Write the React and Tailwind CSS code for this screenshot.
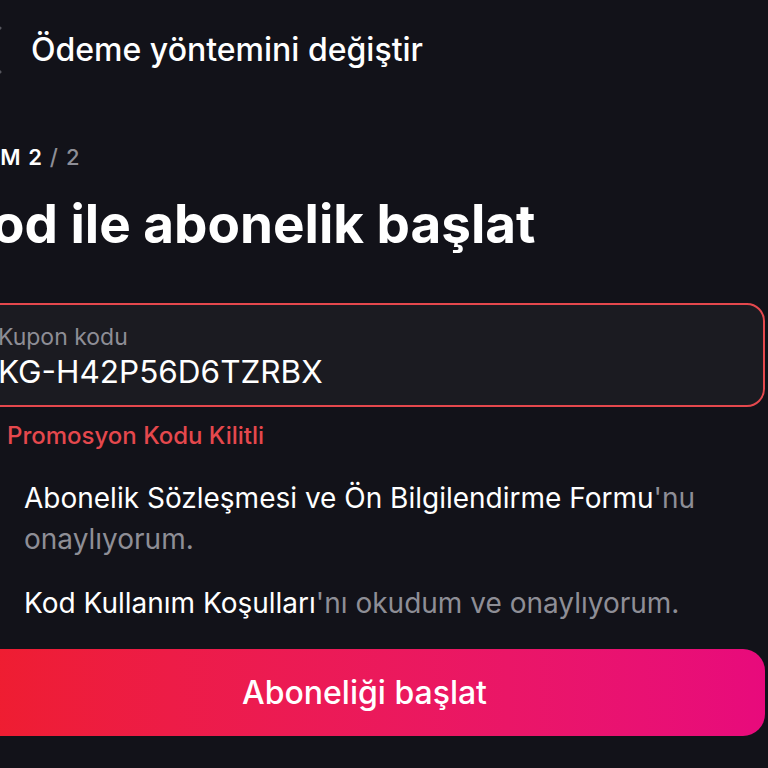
const Checkbox = () => (
  <span className="mt-1 w-9 h-9 shrink-0 rounded-lg border-2 border-[#3a3a44] bg-[#1c1c22]" />
);

export default function App() {
  return (
    <div
      className="w-[768px] h-[768px] overflow-hidden bg-[#121219] text-white"
      style={{ fontFamily: "Inter, 'Noto Sans', sans-serif" }}
    >
      <div className="ml-[-36px] w-[801px] flex flex-col">
        {/* header */}
        <div className="h-[100px] flex items-center">
          <svg viewBox="0 0 26 48" className="ml-[12px] w-[26px] h-[48px] shrink-0" fill="none">
            <polyline points="24,2 2,24 24,46" stroke="#55555d" strokeWidth="3" strokeLinecap="round" strokeLinejoin="round" />
          </svg>
          <h1 className="ml-[29px] text-[32px] font-medium leading-none">Ödeme yöntemini değiştir</h1>
        </div>

        {/* step */}
        <p className="mt-[46px] ml-[-5px] text-[22px] font-semibold tracking-wider leading-none">
          ADIM 2 <span className="text-[#8e8e96] font-medium">/ 2</span>
        </p>

        <h2 className="mt-[30px] ml-[-8px] text-[53px] font-bold leading-none">
          Kod ile abonelik başlat
        </h2>

        {/* coupon input */}
        <div className="mt-[52px] h-[104px] rounded-[18px] border-2 border-[#e5484d] bg-[#1b1b21] pl-8 pt-[21px] flex flex-col">
          <span className="text-[23px] text-[#8e8e96] leading-none">Kupon kodu</span>
          <span className="mt-[7px] text-[31.5px] leading-none">KG-H42P56D6TZRBX</span>
        </div>
        <p className="mt-[17px] pl-[43px] text-[24px] font-medium text-[#e5484d] leading-none">
          Promosyon Kodu Kilitli
        </p>

        {/* agreements */}
        <div className="mt-[30px] flex flex-col gap-[23px]">
          <label className="flex gap-6 text-[28px] leading-[41px] text-[#8e8e96]">
            <Checkbox />
            <span>
              <span className="text-white">Abonelik Sözleşmesi ve Ön Bilgilendirme Formu</span>'nu onaylıyorum.
            </span>
          </label>
          <label className="flex gap-6 text-[28px] leading-[41px] text-[#8e8e96]">
            <Checkbox />
            <span>
              <span className="text-white">Kod Kullanım Koşulları</span>'nı okudum ve onaylıyorum.
            </span>
          </label>
        </div>

        <button className="mt-[25px] h-[87px] rounded-[22px] bg-gradient-to-r from-[#ef1d2c] to-[#e80a7c] text-[32px] font-medium text-white">
          Aboneliği başlat
        </button>
      </div>
    </div>
  );
}
